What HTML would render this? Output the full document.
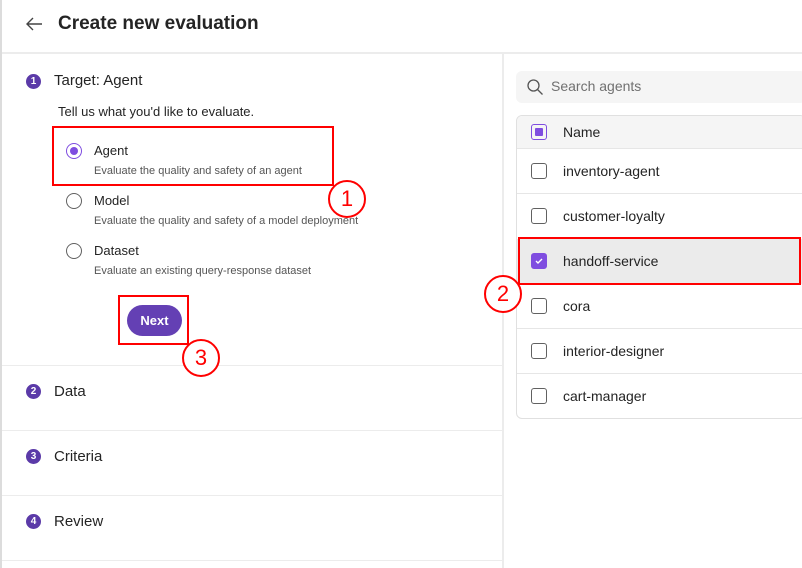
<!DOCTYPE html>
<html><head><style>
*{margin:0;padding:0;box-sizing:border-box}
body{width:802px;height:568px;overflow:hidden;background:#fff;font-family:"Liberation Sans",sans-serif;color:#242424;position:relative}
.a{position:absolute}
.step{position:absolute;left:26px;width:15px;height:15px;border-radius:50%;background:#5b3aa8;color:#fff;font-size:10px;font-weight:bold;text-align:center;line-height:15px}
.hl{position:absolute;left:2px;width:500px;height:1px;background:#ececec}
.radio{position:absolute;left:66px;width:16px;height:16px;border-radius:50%;border:1.5px solid #616161}
.t{position:absolute;font-size:14px}
.s{position:absolute;font-size:11px;color:#555}
.cb{position:absolute;left:531px;width:16px;height:16px;border:1.5px solid #616161;border-radius:3px}
.row{position:absolute;left:517px;width:285px;height:1px;background:#e6e6e6}
.red{position:absolute;border:2px solid #f00}
.circ{position:absolute;width:38px;height:38px;border:2px solid #f00;border-radius:50%;background:#fff;color:#f00;font-size:22px;text-align:center;line-height:34px}
</style></head><body>
<div class="a" style="left:0;top:0;width:2px;height:568px;background:#dcdcdc"></div>
<svg class="a" style="left:25px;top:16px" width="18" height="16" viewBox="0 0 18 16"><path d="M17 8H2M8 2L2 8l6 6" fill="none" stroke="#444" stroke-width="1.4"/></svg>
<div class="a" style="left:58px;top:13px;font-size:19px;font-weight:bold;color:#242424">Create new evaluation</div>
<div class="a" style="left:2px;top:52px;width:800px;height:2px;background:#ececec"></div>
<div class="a" style="left:502px;top:54px;width:2px;height:514px;background:#ececec"></div>

<div class="step" style="top:74px">1</div>
<div class="t" style="left:54px;top:72px;font-size:15px">Target: Agent</div>
<div class="t" style="left:58px;top:104px;font-size:13px">Tell us what you'd like to evaluate.</div>
<div class="radio" style="top:143px;border-color:#7f4de0"><div style="position:absolute;left:2.5px;top:2.5px;width:8px;height:8px;border-radius:50%;background:#7f4de0"></div></div>
<div class="t" style="left:94px;top:143px;font-size:13px">Agent</div>
<div class="s" style="left:94px;top:165px">Evaluate the quality and safety of an agent</div>
<div class="radio" style="top:193px"></div>
<div class="t" style="left:94px;top:193px;font-size:13px">Model</div>
<div class="s" style="left:94px;top:215px">Evaluate the quality and safety of a model deployment</div>
<div class="radio" style="top:243px"></div>
<div class="t" style="left:94px;top:243px;font-size:13px">Dataset</div>
<div class="s" style="left:94px;top:265px">Evaluate an existing query-response dataset</div>
<div class="a" style="left:127px;top:305px;width:55px;height:31px;border-radius:16px;background:#6440b4;color:#fff;font-size:13px;font-weight:bold;text-align:center;line-height:31px">Next</div>
<div class="hl" style="top:365px"></div>
<div class="step" style="top:384px">2</div><div class="t" style="left:54px;top:383px;font-size:15px">Data</div>
<div class="hl" style="top:430px"></div>
<div class="step" style="top:449px">3</div><div class="t" style="left:54px;top:448px;font-size:15px">Criteria</div>
<div class="hl" style="top:495px"></div>
<div class="step" style="top:514px">4</div><div class="t" style="left:54px;top:513px;font-size:15px">Review</div>
<div class="hl" style="top:560px"></div>

<div class="a" style="left:516px;top:71px;width:290px;height:32px;background:#f5f5f5;border-radius:6px"></div>
<svg class="a" style="left:526px;top:78px" width="18" height="18" viewBox="0 0 18 18"><circle cx="7.5" cy="7.5" r="5.5" fill="none" stroke="#555" stroke-width="1.3"/><path d="M11.5 11.5l5 5" stroke="#555" stroke-width="1.3"/></svg>
<div class="t" style="left:551px;top:78px;color:#707070;font-size:14px">Search agents</div>
<div class="a" style="left:516px;top:115px;width:290px;height:304px;border:1px solid #e0e0e0;border-radius:6px;overflow:hidden">
<div style="position:absolute;left:0;top:0;width:100%;height:33px;background:#f5f5f5"></div>
<div style="position:absolute;left:0;top:123px;width:100%;height:45px;background:#ebebeb"></div>
</div>
<div class="cb" style="top:124px;border-color:#7f4de0"><div style="position:absolute;left:2.5px;top:2.5px;width:8px;height:8px;background:#7f4de0;border-radius:1px"></div></div>
<div class="t" style="left:563px;top:124px">Name</div>
<div class="row" style="top:148px"></div>
<div class="cb" style="top:163px"></div><div class="t" style="left:563px;top:163px">inventory-agent</div>
<div class="row" style="top:193px"></div>
<div class="cb" style="top:208px"></div><div class="t" style="left:563px;top:208px">customer-loyalty</div>
<div class="cb" style="top:253px;background:#7f4de0;border-color:#7f4de0"><svg style="position:absolute;left:1px;top:1px" width="12" height="12" viewBox="0 0 12 12"><path d="M3 6l2 2 4-4" fill="none" stroke="#fff" stroke-width="1.4"/></svg></div>
<div class="t" style="left:563px;top:253px">handoff-service</div>
<div class="row" style="top:328px"></div>
<div class="cb" style="top:298px"></div><div class="t" style="left:563px;top:298px">cora</div>
<div class="cb" style="top:343px"></div><div class="t" style="left:563px;top:343px">interior-designer</div>
<div class="row" style="top:373px"></div>
<div class="cb" style="top:388px"></div><div class="t" style="left:563px;top:388px">cart-manager</div>

<div class="red" style="left:52px;top:126px;width:282px;height:60px"></div>
<div class="circ" style="left:328px;top:180px">1</div>
<div class="red" style="left:518px;top:237px;width:283px;height:48px"></div>
<div class="circ" style="left:484px;top:275px">2</div>
<div class="red" style="left:118px;top:295px;width:71px;height:50px"></div>
<div class="circ" style="left:182px;top:339px">3</div>
</body></html>
